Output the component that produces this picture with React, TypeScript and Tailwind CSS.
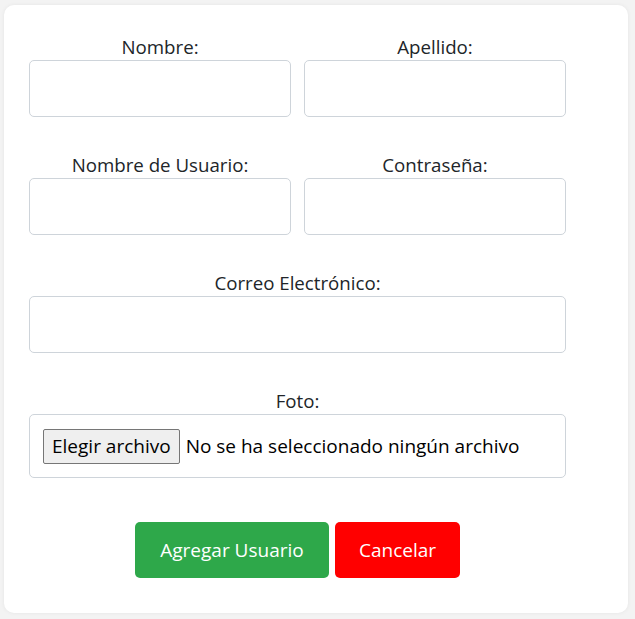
const font = { fontFamily: '"Open Sans", "Noto Sans", sans-serif' };

function Field({ label, className = '' }: { label: string; className?: string }) {
  return (
    <div className={className}>
      <label className="block text-center text-[18.7px] leading-[27px] text-[#212529]">{label}</label>
      <input
        type="text"
        className="block w-full h-[57px] rounded-[5px] border border-[#ced4da] bg-white px-3 outline-none"
      />
    </div>
  );
}

export default function App() {
  return (
    <div className="min-h-screen bg-[#f3f3f3] pl-[4px] pt-[5px]" style={font}>
      <div className="w-[624px] h-[608px] rounded-[10px] bg-white shadow-[0_0_4px_rgba(0,0,0,0.06)] pl-[25px] pt-[28px]">
        <form className="w-[537px] flex flex-col gap-[34px]">
          <div className="grid grid-cols-2 gap-x-[13px]">
            <Field label="Nombre:" />
            <Field label="Apellido:" />
          </div>
          <div className="grid grid-cols-2 gap-x-[13px]">
            <Field label="Nombre de Usuario:" />
            <Field label="Contraseña:" />
          </div>
          <Field label="Correo Electrónico:" />
          <div>
            <label className="block text-center text-[18.7px] leading-[27px] text-[#212529]">Foto:</label>
            <div className="h-[64px] rounded-[5px] border border-[#ced4da] flex items-center pl-[13px] gap-[6px] text-[19px] text-black">
              <button type="button" className="h-[35px] px-[8px] border border-[#767676] rounded-[2px] bg-[#efefef] leading-none">
                Elegir archivo
              </button>
              <span>No se ha seleccionado ningún archivo</span>
            </div>
          </div>
          <div className="flex justify-center gap-[6px] mt-[10px]">
            <button type="button" className="h-[56px] w-[194px] rounded-[5px] bg-[#2ea84a] text-white text-[19px]">
              Agregar Usuario
            </button>
            <button type="button" className="h-[56px] w-[125px] rounded-[5px] bg-[#ff0000] text-white text-[19px]">
              Cancelar
            </button>
          </div>
        </form>
      </div>
    </div>
  );
}
